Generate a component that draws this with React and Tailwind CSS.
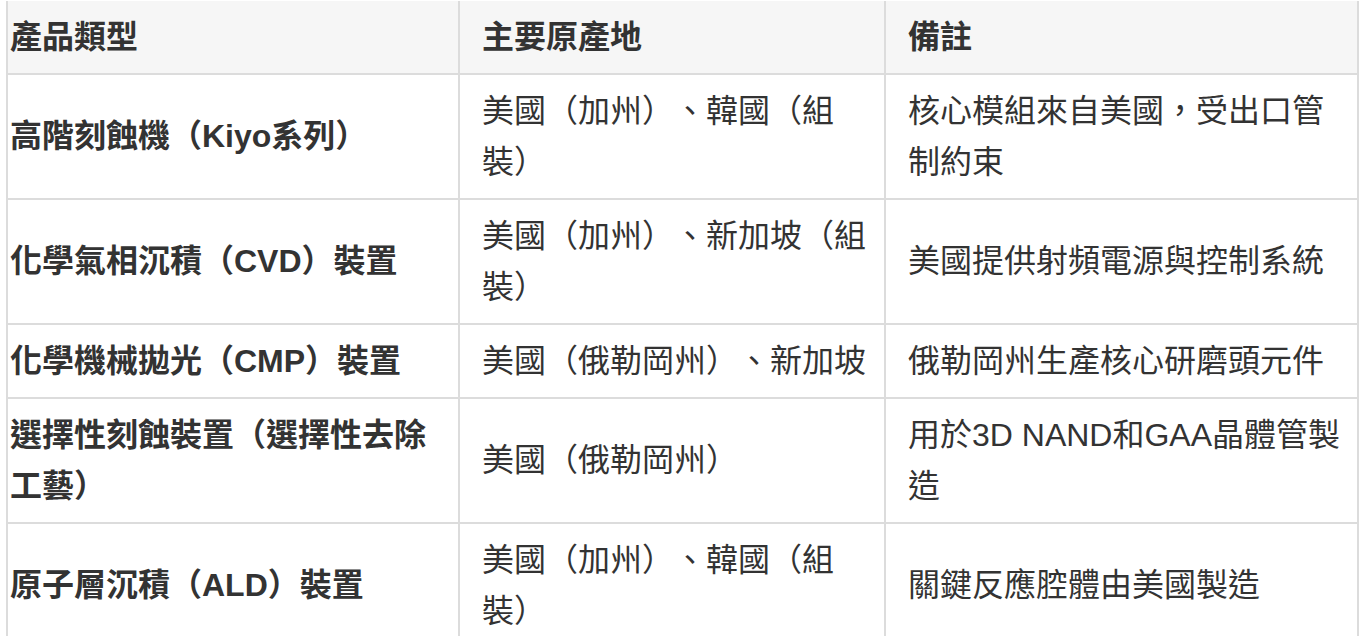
import React from "react";

// rows of the origin table
const rows = [
  {
    product: "高階刻蝕機（Kiyo系列）",
    origin: "美國（加州）、韓國（組裝）",
    note: "核心模組來自美國，受出口管制約束",
  },
  {
    product: "化學氣相沉積（CVD）裝置",
    origin: "美國（加州）、新加坡（組裝）",
    note: "美國提供射頻電源與控制系統",
  },
  {
    product: "化學機械拋光（CMP）裝置",
    origin: "美國（俄勒岡州）、新加坡",
    note: "俄勒岡州生產核心研磨頭元件",
  },
  {
    product: "選擇性刻蝕裝置（選擇性去除工藝）",
    origin: "美國（俄勒岡州）",
    note: "用於3D NAND和GAA晶體管製造",
  },
  {
    product: "原子層沉積（ALD）裝置",
    origin: "美國（加州）、韓國（組裝）",
    note: "關鍵反應腔體由美國製造",
  },
];

const cell =
  "flex items-center border-r-2 border-b-2 border-[#dcdcdc] py-[10.5px]";

export default function App() {
  return (
    <div className="min-h-screen bg-white pt-[1px] text-[32px] leading-[51px] text-[#333333] font-['Liberation_Sans','Noto_Sans_CJK_TC',sans-serif] [text-spacing-trim:space-all]">
      <div className="ml-[6px] grid w-[1353px] grid-cols-[454px_426px_473px]">
        {/* header */}
        <div className={`${cell} border-l-2 bg-[#f6f6f6] pl-[2px] pr-[10px] font-bold`}>
          產品類型
        </div>
        <div className={`${cell} bg-[#f6f6f6] pl-[22px] pr-[10px] font-bold`}>
          主要原產地
        </div>
        <div className={`${cell} bg-[#f6f6f6] pl-[22px] pr-[8px] font-bold`}>
          備註
        </div>

        {/* body */}
        {rows.map((row) => (
          <React.Fragment key={row.product}>
            <div className={`${cell} border-l-2 pl-[2px] pr-[10px] font-bold`}>
              <span>{row.product}</span>
            </div>
            <div className={`${cell} pl-[22px] pr-[10px]`}>
              <span>{row.origin}</span>
            </div>
            <div className={`${cell} pl-[22px] pr-[8px]`}>
              <span>{row.note}</span>
            </div>
          </React.Fragment>
        ))}
      </div>
    </div>
  );
}
